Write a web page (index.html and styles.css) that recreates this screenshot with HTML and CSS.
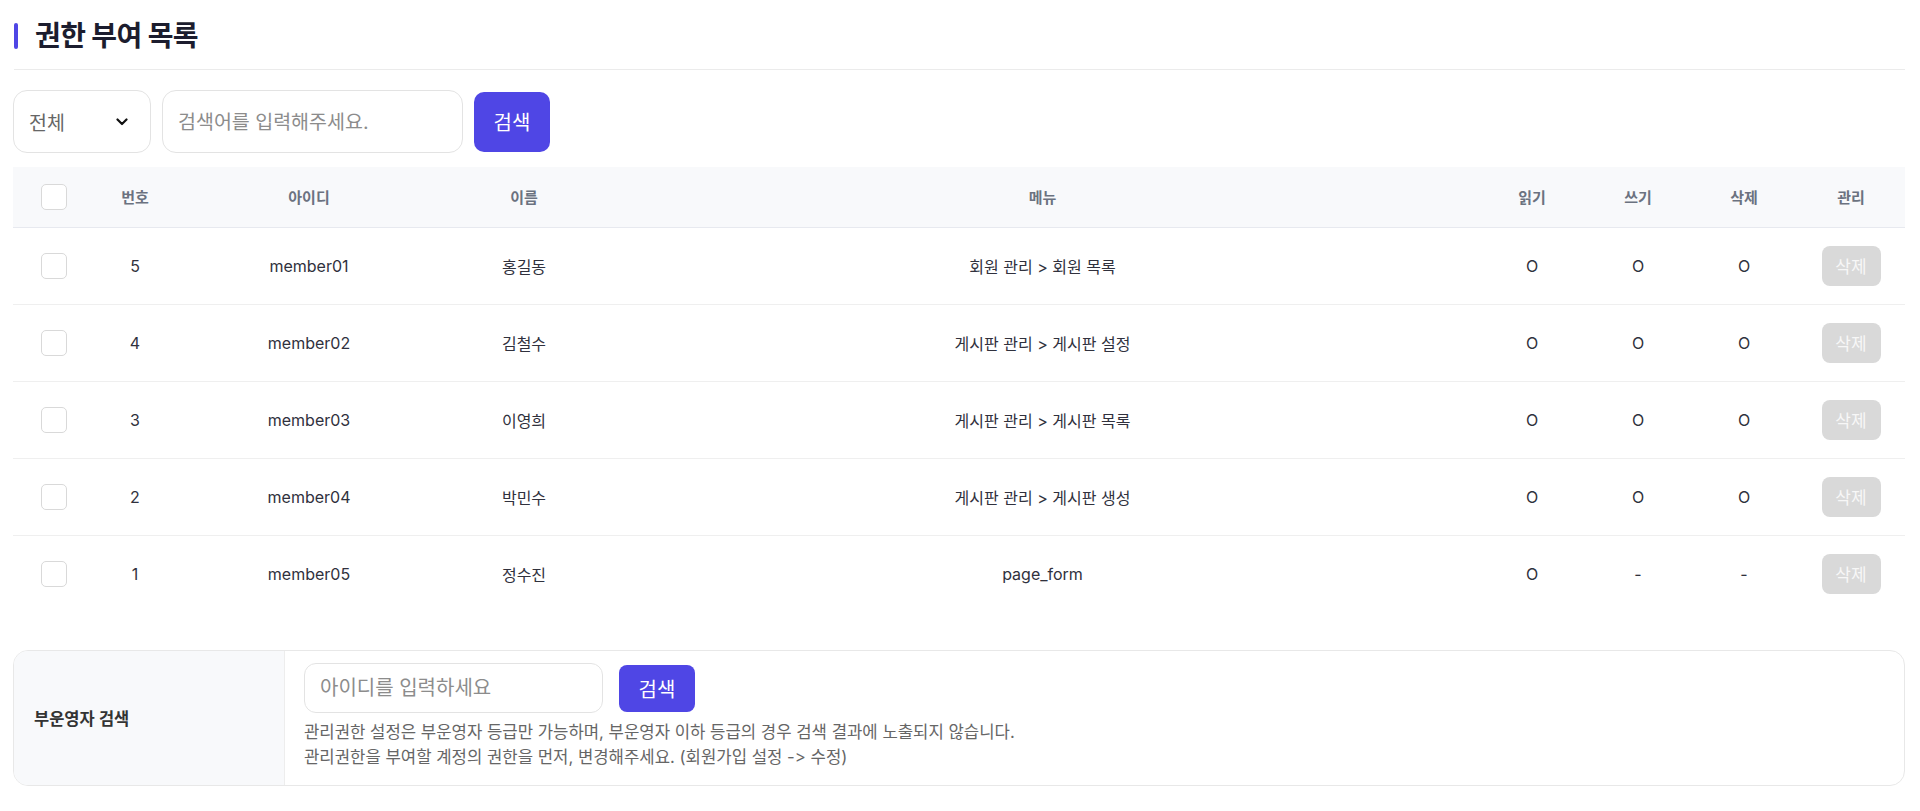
FILE: index.html
```html
<!DOCTYPE html>
<html lang="ko">
<head>
<meta charset="utf-8">
<title>권한 부여 목록</title>
<link rel="stylesheet" href="styles.css">
</head>
<body>
<div class="page">
  <div class="page-title">
    <span class="accent"></span>
    <h1>권한 부여 목록</h1>
  </div>

  <div class="search-row">
    <div class="select">
      <span>전체</span>
      <svg class="chev" width="12" height="8" viewBox="0 0 12 8"><path d="M1.5 1.5 L6 6 L10.5 1.5" fill="none" stroke="#111" stroke-width="2.2" stroke-linecap="round" stroke-linejoin="round"/></svg>
    </div>
    <input class="search-input" type="text" placeholder="검색어를 입력해주세요.">
    <button class="btn-primary">검색</button>
  </div>

  <table class="grid">
    <colgroup>
      <col class="c-chk"><col class="c-no"><col class="c-id"><col class="c-name"><col class="c-menu"><col class="c-perm"><col class="c-perm"><col class="c-perm"><col class="c-manage">
    </colgroup>
    <thead>
      <tr>
        <th><span class="chk"></span></th>
        <th>번호</th>
        <th>아이디</th>
        <th>이름</th>
        <th>메뉴</th>
        <th>읽기</th>
        <th>쓰기</th>
        <th>삭제</th>
        <th>관리</th>
      </tr>
    </thead>
    <tbody>
      <tr>
        <td><span class="chk"></span></td><td>5</td><td>member01</td><td>홍길동</td><td>회원 관리 &gt; 회원 목록</td><td>O</td><td>O</td><td>O</td><td><button class="btn-del">삭제</button></td>
      </tr>
      <tr>
        <td><span class="chk"></span></td><td>4</td><td>member02</td><td>김철수</td><td>게시판 관리 &gt; 게시판 설정</td><td>O</td><td>O</td><td>O</td><td><button class="btn-del">삭제</button></td>
      </tr>
      <tr>
        <td><span class="chk"></span></td><td>3</td><td>member03</td><td>이영희</td><td>게시판 관리 &gt; 게시판 목록</td><td>O</td><td>O</td><td>O</td><td><button class="btn-del">삭제</button></td>
      </tr>
      <tr>
        <td><span class="chk"></span></td><td>2</td><td>member04</td><td>박민수</td><td>게시판 관리 &gt; 게시판 생성</td><td>O</td><td>O</td><td>O</td><td><button class="btn-del">삭제</button></td>
      </tr>
      <tr>
        <td><span class="chk"></span></td><td>1</td><td>member05</td><td>정수진</td><td>page_form</td><td>O</td><td>-</td><td>-</td><td><button class="btn-del">삭제</button></td>
      </tr>
    </tbody>
  </table>

  <div class="sub-box">
    <div class="sub-label">부운영자 검색</div>
    <div class="sub-body">
      <div class="sub-search">
        <input class="sub-input" type="text" placeholder="아이디를 입력하세요">
        <button class="btn-primary btn-sm">검색</button>
      </div>
      <p class="help">관리권한 설정은 부운영자 등급만 가능하며, 부운영자 이하 등급의 경우 검색 결과에 노출되지 않습니다.<br>관리권한을 부여할 계정의 권한을 먼저, 변경해주세요. (회원가입 설정 -&gt; 수정)</p>
    </div>
  </div>
</div>
</body>
</html>
```

FILE: styles.css
```css
* { box-sizing: border-box; }

body {
  margin: 0;
  background: #ffffff;
  font-family: Inter, "Noto Sans CJK KR", sans-serif;
  color: #333;
}

.page {
  padding: 0 15px 0 13px;
}

.page-title {
  display: flex;
  align-items: center;
  height: 70px;
  padding-top: 2px;
  border-bottom: 1px solid #ebebeb;
  margin-left: 1px;
}

.accent {
  width: 4px;
  height: 26px;
  border-radius: 3px;
  background: #4f46e5;
  margin-right: 17px;
}

.page-title h1 {
  margin: 0;
  font-size: 28px;
  font-weight: 700;
  letter-spacing: -0.6px;
  color: #1c1d2e;
  line-height: 34px;
}

.search-row {
  display: flex;
  align-items: center;
  gap: 11px;
  margin-top: 20px;
}

.select {
  width: 138px;
  height: 63px;
  border: 1px solid #e3e3e3;
  border-radius: 14px;
  display: flex;
  align-items: center;
  justify-content: space-between;
  padding: 0 22px 0 15px;
  font-size: 19.5px;
  color: #666;
}

.chev { display: block; }

.search-input {
  width: 301px;
  height: 63px;
  border: 1px solid #e3e3e3;
  border-radius: 14px;
  padding: 0 15px;
  font-family: inherit;
  font-size: 19.5px;
  color: #333;
  outline: none;
}

.search-input::placeholder,
.sub-input::placeholder {
  color: #8c8c8c;
}

.btn-primary {
  width: 76px;
  height: 60px;
  border: none;
  border-radius: 10px;
  background: #4f46e5;
  color: #fff;
  font-family: inherit;
  font-size: 20px;
  padding: 0;
}

.grid {
  width: 100%;
  margin-top: 14px;
  border-collapse: collapse;
  table-layout: fixed;
}

.c-chk { width: 81px; }
.c-no { width: 82px; }
.c-id { width: 266px; }
.c-name { width: 164px; }
.c-menu { width: 873px; }
.c-perm { width: 106px; }
.c-manage { width: 108px; }

.grid th {
  height: 60px;
  background: #f8f9fb;
  border-bottom: 1px solid #e7e9ef;
  font-size: 15px;
  font-weight: 600;
  color: #6b7280;
  text-align: center;
  padding: 0;
}

.grid td {
  height: 77px;
  border-bottom: 1px solid #efefef;
  font-size: 16px;
  color: #30313d;
  text-align: center;
  padding: 0;
}

.grid tbody tr:last-child td {
  border-bottom: none;
}

.chk {
  display: inline-block;
  width: 26px;
  height: 26px;
  border: 1px solid #d9d9d9;
  border-radius: 5px;
  background: #fff;
  vertical-align: middle;
}

.btn-del {
  width: 59px;
  height: 40px;
  border: none;
  border-radius: 8px;
  background: #d9d9d9;
  color: #f7f7f7;
  font-family: inherit;
  font-size: 17px;
  padding: 0;
  vertical-align: middle;
}

.sub-box {
  margin-top: 38px;
  display: grid;
  grid-template-columns: 271px 1fr;
  height: 136px;
  border: 1px solid #e8e8e8;
  border-radius: 15px;
  overflow: hidden;
}

.sub-label {
  background: #f8f9fb;
  border-right: 1px solid #ededed;
  display: flex;
  align-items: center;
  padding-left: 20px;
  font-size: 16.5px;
  font-weight: 600;
  color: #333;
}

.sub-body {
  padding: 12px 19px 0 19px;
}

.sub-search {
  display: flex;
  align-items: center;
  gap: 16px;
}

.sub-input {
  width: 299px;
  height: 50px;
  border: 1px solid #e3e3e3;
  border-radius: 12px;
  padding: 0 15px;
  font-family: inherit;
  font-size: 20px;
  outline: none;
}

.btn-sm {
  height: 47px;
  border-radius: 8px;
}

.help {
  margin: 7px 0 0;
  font-size: 16.7px;
  line-height: 25px;
  color: #666;
}
```
